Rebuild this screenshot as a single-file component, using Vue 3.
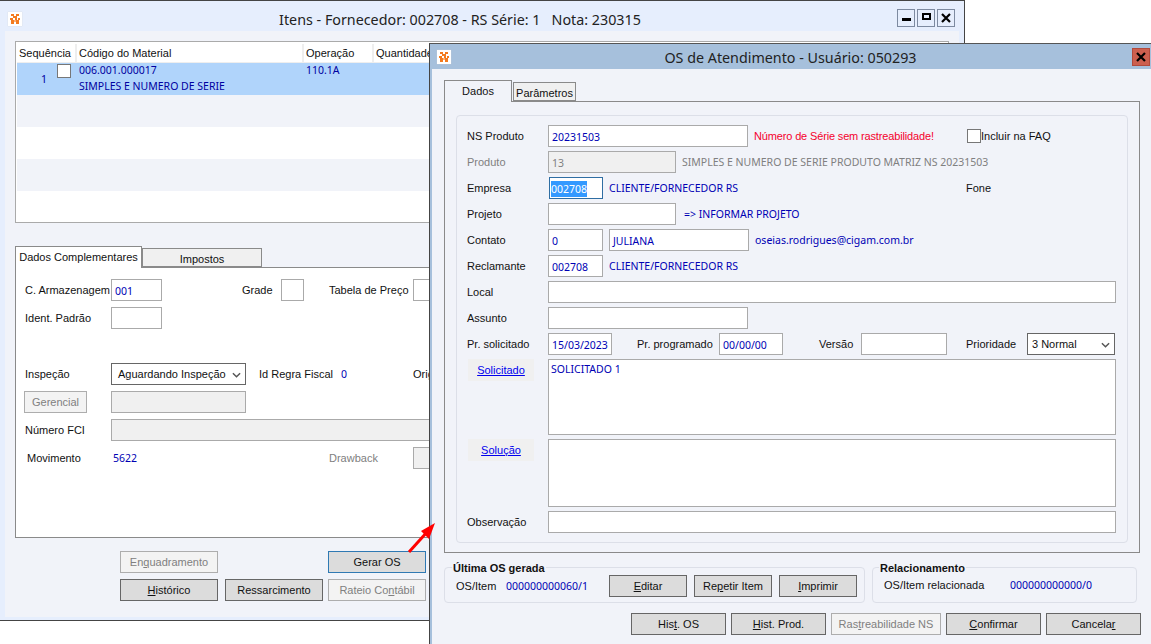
<script setup>
const rows = [
  { cls: 'sel' }, { cls: 'alt' }, { cls: '' }, { cls: 'alt' }, { cls: '' }
]
</script>

<template>
  <div class="desk">
    <section class="win win-back">
      <header class="bar bbar">
        <svg class="logo" viewBox="0 0 14 14"><rect width="14" height="14" fill="#fff"/><path d="M3 2h3v2H3zM8 2h3v2H8zM5 4h4v2H5zM2 6h3v2H2zM7 6h2v2H7zM10 6h2v2h-2zM3 8h3v4H3zM8 8h3v4H8z" fill="#f47b20"/><path d="M6 8h2v2H6z" fill="#f9b27a"/></svg>
        <h1 class="title">Itens - Fornecedor: 002708 - RS Série: 1 &nbsp; Nota: 230315</h1>
        <div class="ctrls">
          <span class="ctrl"><i class="min"></i></span>
          <span class="ctrl"><i class="max"></i></span>
          <span class="ctrl"><svg viewBox="0 0 10 10"><path d="M1 1l8 8M9 1l-8 8" stroke="#000" stroke-width="2.2"/></svg></span>
        </div>
      </header>
      <div class="back-body">
        <div class="grid">
          <div class="grid-head">
            <span class="h1">Sequência</span><span class="h2">Código do Material</span><span class="h3">Operação</span><span class="h4">Quantidade</span>
          </div>
          <div v-for="(r, i) in rows" :key="i" class="grid-row" :class="r.cls">
            <template v-if="i === 0">
              <span class="seq nums">1</span>
              <span class="chk grid-chk"></span>
              <span class="mat nums"><span>006.001.000017</span><span>SIMPLES E NUMERO DE SERIE</span></span>
              <span class="op nums">110.1A</span>
            </template>
          </div>
        </div>

        <div class="tabs back-tabs">
          <span class="tab on t-dc">Dados Complementares</span>
          <span class="tab t-imp">Impostos</span>
        </div>
        <div class="back-panel">
          <div class="lrow">
            <label class="ll">C. Armazenagem</label><span class="inp w51 val">001</span>
            <label class="grade">Grade</label><span class="inp w23"></span>
            <label class="tabela">Tabela de Preço</label><span class="inp w40"></span>
          </div>
          <div class="lrow">
            <label class="ll">Ident. Padrão</label><span class="inp w51"></span>
          </div>
          <div class="lrow"></div>
          <div class="lrow">
            <label class="ll">Inspeção</label>
            <span class="sel-box w135">Aguardando Inspeção<svg class="chev" viewBox="0 0 10 6"><path d="M1 1l4 4 4-4" fill="none" stroke="#555" stroke-width="1.6"/></svg></span>
            <label class="regra">Id Regra Fiscal</label><span class="val zero">0</span>
            <label class="orig">Origem</label>
          </div>
          <div class="lrow">
            <span class="ger-wrap"><span class="btn dis ger">Gerencial</span></span><span class="inp dinp w135"></span>
          </div>
          <div class="lrow">
            <label class="ll">Número FCI</label><span class="inp dinp fci"></span>
          </div>
          <div class="lrow">
            <label class="ll mov">Movimento</label><span class="val mv">5622</span>
            <label class="draw">Drawback</label><span class="inp dinp w40"></span>
          </div>
        </div>
        <div class="back-btns">
          <div class="brow">
            <span class="btn dis b98"><span>En<u>q</u>uadramento</span></span>
            <span class="gap-btn"></span>
            <span class="btn focus b98">Gerar OS</span>
          </div>
          <div class="brow">
            <span class="btn b98"><span><u>H</u>istórico</span></span>
            <span class="btn b98">Ressarcimento</span>
            <span class="btn dis b98"><span>Rateio Co<u>n</u>tábil</span></span>
          </div>
        </div>
      </div>
    </section>

    <section class="win win-front">
      <header class="bar fbar">
        <svg class="logo" viewBox="0 0 14 14"><rect width="14" height="14" fill="#fff"/><path d="M3 2h3v2H3zM8 2h3v2H8zM5 4h4v2H5zM2 6h3v2H2zM7 6h2v2H7zM10 6h2v2h-2zM3 8h3v4H3zM8 8h3v4H8z" fill="#f47b20"/><path d="M6 8h2v2H6z" fill="#f9b27a"/></svg>
        <h1 class="title">OS de Atendimento - Usuário: 050293</h1>
        <span class="close"><svg viewBox="0 0 10 10"><path d="M1 1l8 8M9 1l-8 8" stroke="#000" stroke-width="2.2"/></svg></span>
      </header>
      <div class="front-body">
        <div class="tabs front-tabs">
          <span class="tab on t-dados">Dados</span>
          <span class="tab t-par">Parâmetros</span>
        </div>
        <div class="front-panel">
          <div class="fset">
            <div class="frow">
              <label class="fl">NS Produto</label><span class="inp w200 val">20231503</span>
              <span class="red">Número de Série sem rastreabilidade!</span>
              <span class="faq"><span class="chk"></span>Incluir na FAQ</span>
            </div>
            <div class="frow">
              <label class="fl gray">Produto</label><span class="inp dinp w128 gray nums">13</span>
              <span class="gray desc nums">SIMPLES E NUMERO DE SERIE PRODUTO MATRIZ NS 20231503</span>
            </div>
            <div class="frow">
              <label class="fl">Empresa</label><span class="inp w55 active nums"><mark>002708</mark></span>
              <span class="val desc">CLIENTE/FORNECEDOR RS</span>
              <span class="fone">Fone</span>
            </div>
            <div class="frow">
              <label class="fl">Projeto</label><span class="inp w128"></span>
              <span class="val desc proj">=&gt; INFORMAR PROJETO</span>
            </div>
            <div class="frow">
              <label class="fl">Contato</label><span class="inp w55 val">0</span>
              <span class="inp w140 val juliana">JULIANA</span>
              <span class="val desc">oseias.rodrigues@cigam.com.br</span>
            </div>
            <div class="frow">
              <label class="fl">Reclamante</label><span class="inp w55 val">002708</span>
              <span class="val desc">CLIENTE/FORNECEDOR RS</span>
            </div>
            <div class="frow">
              <label class="fl">Local</label><span class="inp grow"></span>
            </div>
            <div class="frow">
              <label class="fl">Assunto</label><span class="inp w200"></span>
            </div>
            <div class="frow">
              <label class="fl">Pr. solicitado</label><span class="inp w64 val">15/03/2023</span>
              <label class="prog">Pr. programado</label><span class="inp w64 val">00/00/00</span>
              <label class="vers">Versão</label><span class="inp w86"></span>
              <label class="prio">Prioridade</label>
              <span class="sel-box w88">3 Normal<svg class="chev" viewBox="0 0 10 6"><path d="M1 1l4 4 4-4" fill="none" stroke="#555" stroke-width="1.6"/></svg></span>
            </div>
            <div class="frow tall h76">
              <span class="lnk-wrap"><a class="lnk">Solicitado</a></span><span class="inp grow area val">SOLICITADO 1</span>
            </div>
            <div class="frow tall h68">
              <span class="lnk-wrap"><a class="lnk">Solução</a></span><span class="inp grow area"></span>
            </div>
            <div class="frow">
              <label class="fl">Observação</label><span class="inp grow"></span>
            </div>
          </div>
        </div>

        <div class="groups">
          <div class="grp g1">
            <b class="legend">Última OS gerada</b>
            <span class="os-l">OS/Item</span>
            <span class="val os-v">000000000060/1</span>
            <span class="btn b78"><span><u>E</u>ditar</span></span>
            <span class="btn b78"><span>Re<u>p</u>etir Item</span></span>
            <span class="btn b78"><span><u>I</u>mprimir</span></span>
          </div>
          <div class="grp g2">
            <b class="legend">Relacionamento</b>
            <span class="rel-l">OS/Item relacionada</span>
            <span class="val">000000000000/0</span>
          </div>
        </div>

        <div class="foot">
          <span class="btn b95"><span>His<u>t</u>. OS</span></span>
          <span class="btn b95"><span><u>H</u>ist. Prod.</span></span>
          <span class="btn dis b110"><span>Ras<u>t</u>reabilidade NS</span></span>
          <span class="btn b95"><span><u>C</u>onfirmar</span></span>
          <span class="btn b95"><span>Cancela<u>r</u></span></span>
        </div>
      </div>
    </section>

    <svg class="arrow" viewBox="0 0 30 32"><path d="M2 30L21 9" stroke="#f00" stroke-width="3"/><path d="M28 1L14 9l8 8z" fill="#f00"/></svg>
  </div>
</template>

<style>
html, body { margin: 0; background: #fff; overflow: hidden; }
</style>

<style scoped>
.desk { position: relative; width: 1151px; height: 644px; overflow: hidden; background: #fff; font: 11px/14px "Liberation Sans", sans-serif; color: #111; }
.desk * { box-sizing: border-box; }

.win { position: absolute; }
.win-back { left: 0; top: 0; width: 965px; height: 621px; background: #e6eefd; border-top: 1px solid #444; border-right: 1px solid #444; border-bottom: 1px solid #444; display: flex; flex-direction: column; }
.win-front { left: 429px; top: 43px; width: 722px; height: 601px; background: #a6c0dc; border-top: 1px solid #555; border-left: 1px solid #444; display: flex; flex-direction: column; }

.bar { height: 30px; flex: none; display: flex; align-items: center; position: relative; padding-left: 8px; }
.bbar { padding-top: 6px; }
.fbar { height: 25px; padding-left: 7px; background: #a6c0dc; }
.logo { width: 14px; height: 14px; flex: none; box-shadow: 0 0 1px #ccc; }
.title { position: absolute; left: 0; right: 0; margin: 0; text-align: center; font: 400 14.3px/20px "Noto Sans", sans-serif; color: #222; pointer-events: none; }
.win-back .title { top: 9px; padding-right: 44px; }
.win-front .title { top: 4px; }
.ctrls { margin-left: auto; margin-right: 9px; margin-top: -3px; display: flex; gap: 2px; z-index: 1; }
.ctrl { width: 18px; height: 18px; border: 1px solid #7d8aa0; display: flex; align-items: center; justify-content: center; }
.ctrl svg { width: 10px; height: 10px; }
.min { width: 9px; height: 3px; background: #000; margin-top: 4px; }
.max { width: 9px; height: 7px; border: 2px solid #000; margin-top: -2px; }
.close { position: absolute; right: 1px; top: 4px; width: 18px; height: 18px; background: #cc5f4f; border: 1px solid #b24a3c; display: flex; align-items: center; justify-content: center; }
.close svg { width: 10px; height: 10px; }

.back-body { flex: 1; margin: 0 5px 3px 5px; padding: 10px 10px 0 10px; background: #f1f3f9; display: flex; flex-direction: column; }
.grid { height: 182px; flex: none; border: 1px solid #aaa; background: #fff; padding: 2px 0 0 1px; }
.grid-head { height: 19px; display: flex; background: #fff; border-bottom: 1px solid #eee; }
.grid-head span { padding: 2px 2px 0; border-right: 2px solid #eee; white-space: nowrap; }
.h1 { width: 60px; }
.h2 { width: 227px; }
.h3 { width: 70px; }
.h4 { width: 100px; }
.grid-row { height: 32px; position: relative; display: flex; }
.grid-row.sel { background: #b0d4fb; color: #0000a0; }
.grid-row.alt { background: #f1f3f9; }
.seq { position: absolute; left: 24px; top: 8px; }
.grid-chk { position: absolute; left: 40px; top: 1px; width: 13px; height: 13px; }
.mat { position: absolute; left: 62px; top: -1px; display: flex; flex-direction: column; line-height: 16px; white-space: nowrap; }
.op { position: absolute; left: 289px; top: -1px; line-height: 16px; }
.chk { width: 14px; height: 14px; border: 1px solid #777; background: #fff; display: inline-block; flex: none; }
.nums { font: 10.5px/16px "Noto Sans", sans-serif; }

.tabs { display: flex; align-items: flex-end; flex: none; position: relative; z-index: 1; }
.tab { display: flex; align-items: center; justify-content: center; border: 1px solid #8a8a8a; background: #f0f0f0; height: 19px; padding-top: 3px; }
.tab.on { background: #fff; border-bottom: 0; height: 22px; margin-bottom: -1px; padding: 0 0 1px; }
.back-tabs { margin-top: 23px; height: 21px; }
.t-dc { width: 127px; }
.t-imp { width: 120px; }
.back-panel { height: 271px; flex: none; background: #fff; border: 1px solid #8a8a8a; border-right: 0; padding: 11px 0 0 9px; display: flex; flex-direction: column; gap: 6px; }
.lrow { height: 22px; display: flex; align-items: center; flex: none; white-space: nowrap; }
.ll { width: 86px; flex: none; white-space: nowrap; }
.mov { padding-left: 2px; }
.inp { height: 22px; border: 1px solid #aaa; background: #fff; display: flex; align-items: center; padding: 2px 3px 0; flex: none; white-space: nowrap; }
.dinp { background: #f0f0f0; }
.grow { flex: 1; }
.val { color: #0000b4; font: 10.5px/14px "Noto Sans", sans-serif; }
.gray { color: #808080; }
.w51 { width: 51px; }
.w23 { width: 23px; }
.w40 { width: 40px; }
.w135 { width: 135px; }
.fci { width: 400px; }
.grade { margin-left: 80px; width: 39px; }
.tabela { margin-left: 25px; width: 84px; white-space: nowrap; }
.sel-box { height: 22px; border: 1px solid #666; background: #fff; display: flex; align-items: center; padding-left: 6px; position: relative; flex: none; white-space: nowrap; }
.chev { position: absolute; right: 4px; top: 8px; width: 9px; height: 6px; }
.regra { margin-left: 13px; width: 82px; white-space: nowrap; }
.zero { width: 72px; }
.ger-wrap { width: 86px; flex: none; }
.ger { width: 63px; height: 20px; margin-left: -1px; }
.mv { width: 216px; margin-left: 2px; }
.draw { width: 84px; color: #808080; }
.back-btns { margin-top: 13px; padding-left: 105px; display: flex; flex-direction: column; gap: 6px; }
.brow { display: flex; gap: 7px; }
.gap-btn { width: 98px; flex: none; visibility: hidden; }
.brow .btn:last-child { margin-left: -2px; }
.btn { height: 22px; flex: none; display: flex; align-items: center; justify-content: center; border: 1px solid #666; background: #dcdcdc; color: #111; white-space: nowrap; }
.btn.dis { background: #f3f3f3; border-color: #adadad; color: #808080; }
.btn.focus { border-color: #2f79b3; }
.b98 { width: 98px; }
.b78 { width: 78px; margin-right: 7px; }
.b95 { width: 95px; }
.b110 { width: 110px; }

.front-body { flex: 1; margin-left: 2px; background: #f1f3f9; padding: 12px 11px 0 12px; display: flex; flex-direction: column; }
.front-tabs { height: 20px; }
.tab.on.t-dados { width: 68px; background: #f1f3f9; }
.t-par { width: 63px; margin-left: 1px; }
.front-panel { height: 452px; flex: none; border: 1px solid #8a8a8a; padding: 13px 11px 9px 11px; }
.fset { height: 100%; border: 1px solid #dcdfe8; border-radius: 4px; padding: 9px 11px 0 10px; display: flex; flex-direction: column; gap: 4px; position: relative; }
.frow { height: 22px; display: flex; align-items: center; flex: none; }
.fl { width: 81px; flex: none; white-space: nowrap; }
.tall { align-items: flex-start; }
.h76 { height: 76px; }
.h68 { height: 68px; }
.w200 { width: 200px; }
.w128 { width: 128px; }
.w55 { width: 55px; }
.w140 { width: 140px; }
.w64 { width: 64px; }
.w86 { width: 86px; }
.w88 { width: 88px; padding-left: 4px; }
.red { color: #f5002d; margin-left: 6px; width: 213px; white-space: nowrap; letter-spacing: -.15px; }
.faq { display: flex; align-items: center; color: #111; white-space: nowrap; }
.desc { margin-left: 6px; white-space: nowrap; }
.proj { margin-left: 8px; }
.juliana { margin-left: 6px; }
.fone { position: absolute; left: 509px; }
.active { border-color: #2f6ea3; padding-left: 1px; margin-left: 1px; width: 54px; }
mark { background: #3399ff; color: #fff; }
.prog { margin-left: 25px; width: 82px; white-space: nowrap; }
.vers { margin-left: 36px; width: 42px; }
.prio { margin-left: 19px; width: 61px; }
.area { height: 100%; align-items: flex-start; padding-top: 2px; padding-left: 2px; }
.lnk-wrap { width: 81px; flex: none; padding-left: 1px; }
.lnk { display: flex; width: 66px; height: 22px; align-items: center; justify-content: center; background: #f0f0f0; color: #0000ee; text-decoration: underline; }

.groups { margin-top: 14px; display: flex; gap: 7px; flex: none; }
.grp { position: relative; height: 36px; border: 1px solid #dcdfe8; border-radius: 4px; display: flex; align-items: center; }
.g1 { width: 421px; padding-left: 11px; padding-top: 1px; }
.g2 { width: 265px; padding-left: 11px; }
.legend { position: absolute; top: -7px; left: 7px; padding: 0 1px; line-height: 14px; background: #f1f3f9; color: #111; }
.g2 .legend { left: 6px; }
.os-l { width: 50px; }
.os-v { width: 103px; }
.rel-l { width: 126px; }
.foot { margin-top: 10px; padding-left: 187px; display: flex; gap: 5px; flex: none; }

.arrow { position: absolute; left: 407px; top: 522px; width: 30px; height: 32px; }
</style>
